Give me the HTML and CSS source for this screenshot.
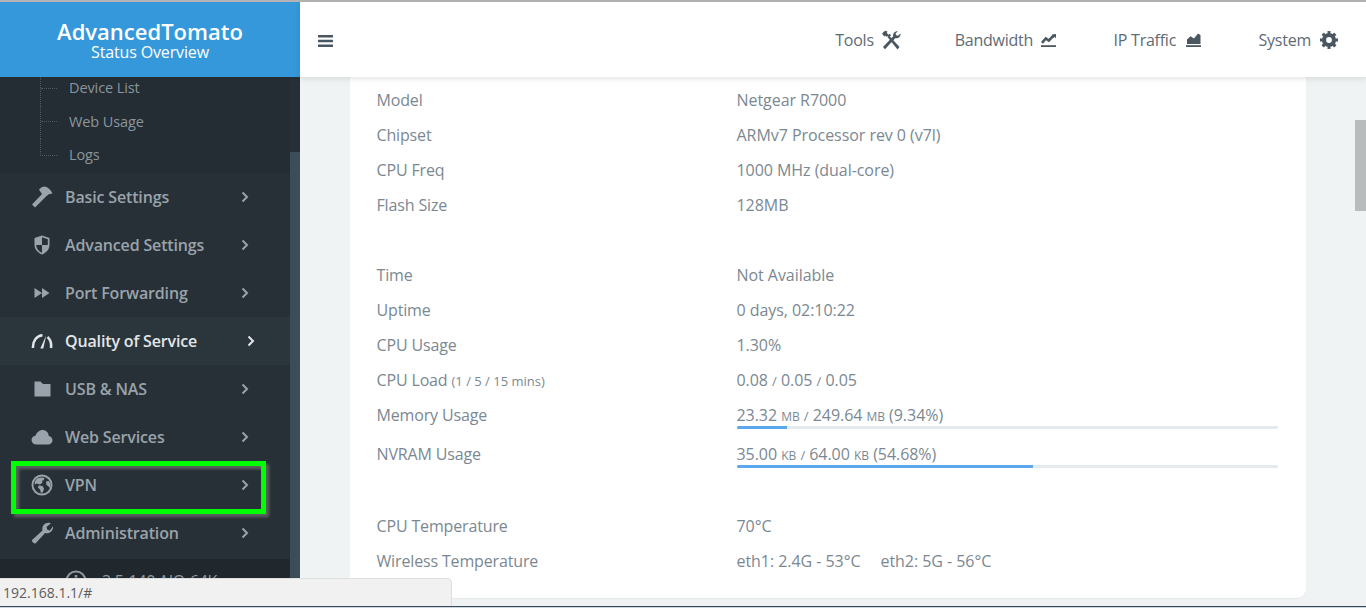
FILE: index.html
```html
<!DOCTYPE html>
<html lang="en">
<head>
<meta charset="utf-8">
<title>AdvancedTomato - Status Overview</title>
<link rel="stylesheet" href="styles.css">
</head>
<body>
<div class="app">
  <div class="topline"></div>
  <div class="screen">
    <aside class="sidebar">
      <header class="brand">
        <div class="brand-name">AdvancedTomato</div>
        <div class="brand-sub">Status Overview</div>
      </header>
      <div class="side-body">
        <nav class="side-nav">
          <ul class="sub">
            <li><span class="tick"></span><a>Device List</a></li>
            <li><span class="tick"></span><a>Web Usage</a></li>
            <li><span class="tick"></span><a>Logs</a></li>
          </ul>
          <a class="item">
            <svg class="ico" viewBox="0 0 22 22"><path d="M1 18.5 11 8 8 3.8Q10.500.500 14 .5 19 2 21.500 7.500L17.800 8.300 15 10.500 4 21.500Z"/></svg>
            <span class="item-label">Basic Settings</span>
            <svg class="chev" viewBox="0 0 8 12"><path d="M1.500 1.500 6 6 1.500 10.500"/></svg>
          </a>
          <a class="item">
            <svg class="ico" viewBox="0 0 22 22"><path d="M11 1.500 18.500 4V11C18.500 16 14 19.500 11 20.500 8 19.500 3.500 16 3.500 11V4Z"/><path class="cut" d="M11 3.200V11H16.800V5.200ZM11 11V18.800C8.500 17.700 5.400 15 5.200 11Z"/></svg>
            <span class="item-label">Advanced Settings</span>
            <svg class="chev" viewBox="0 0 8 12"><path d="M1.500 1.500 6 6 1.500 10.500"/></svg>
          </a>
          <a class="item">
            <svg class="ico" viewBox="0 0 22 22"><path d="M3.500 6 11 11 3.500 16ZM11 6 18.500 11 11 16Z"/></svg>
            <span class="item-label">Port Forwarding</span>
            <svg class="chev" viewBox="0 0 8 12"><path d="M1.500 1.500 6 6 1.500 10.500"/></svg>
          </a>
          <a class="item item-active">
            <svg class="ico" viewBox="0 0 22 22"><path class="line" d="M2 18C1.500 11 6 5.500 11.500 5.300M16.500 7C19.500 9.500 20.500 14 20 18"/><path d="M9.300 18.500 15.200 5.500 12.300 18.500Z"/></svg>
            <span class="item-label">Quality of Service</span>
            <svg class="chev" viewBox="0 0 8 12"><path d="M1.500 1.500 6 6 1.500 10.500"/></svg>
          </a>
          <a class="item">
            <svg class="ico" viewBox="0 0 22 22"><path d="M3.500 3.500H9.500L12 6H19.500V18.500H3.500Z"/></svg>
            <span class="item-label">USB &amp; NAS</span>
            <svg class="chev" viewBox="0 0 8 12"><path d="M1.500 1.500 6 6 1.500 10.500"/></svg>
          </a>
          <a class="item">
            <svg class="ico" viewBox="0 0 22 22"><path d="M5.500 18.500C2.500 18.500.500 16.500.500 14 .500 11.500 2.500 9.800 4.500 9.800 5.500 6.500 8.500 4 11.500 4 15 4 17.500 6.500 17.800 10 20 10.300 21.500 12 21.500 14.200 21.500 16.500 19.500 18.500 17 18.500Z"/></svg>
            <span class="item-label">Web Services</span>
            <svg class="chev" viewBox="0 0 8 12"><path d="M1.500 1.500 6 6 1.500 10.500"/></svg>
          </a>
          <a class="item">
            <svg class="ico" viewBox="0 0 22 22"><circle cx="11" cy="11" r="10.500"/><circle class="cut" cx="11" cy="11" r="8.600"/><path d="M6 4.500 10 3.500 13.500 4 12.500 6.500 11 6.500 11.500 8.500 9 10.500 5.500 9.500 4 10.500 3.500 8ZM7.500 11.500 11.500 12 13 14.500 12 18 10 19 9 15.500 7 13.500ZM15 7.500 18 7 19.500 10.500 19 14 17 12 15.500 11Z"/></svg>
            <span class="item-label">VPN</span>
            <svg class="chev" viewBox="0 0 8 12"><path d="M1.500 1.500 6 6 1.500 10.500"/></svg>
          </a>
          <a class="item">
            <svg class="ico" viewBox="0 0 22 22"><path d="M1 18 11.500 8.500C10.500 4.500 13.500.500 18 .800 19 .900 19.500 1.200 19.800 1.500L15.500 5 16.300 7.700 18.800 8.500 22 4.300C22.500 8.800 18.500 12.500 14 11L4.500 21.500C3 22 .500 19.500 1 18Z"/></svg>
            <span class="item-label">Administration</span>
            <svg class="chev" viewBox="0 0 8 12"><path d="M1.500 1.500 6 6 1.500 10.500"/></svg>
          </a>
          <div class="side-foot">
            <svg class="foot-ico" viewBox="0 0 22 22"><circle class="line" cx="11" cy="11" r="9.500"/><rect x="9.700" y="5" width="2.600" height="2.600"/><rect x="9.700" y="9" width="2.600" height="8"/></svg>
            <span class="foot-text">3.5-140 AIO-64K</span>
          </div>
        </nav>
        <div class="side-track"><div class="side-thumb"></div></div>
      </div>
    </aside>

    <div class="main">
      <header class="topbar">
        <svg class="burger" viewBox="0 0 15 12"><path d="M0 0H15V2.500H0ZM0 4.800H15V7.300H0ZM0 9.500H15V12H0Z"/></svg>
        <div class="top-links">
          <a class="top-link">Tools
            <svg class="top-ico ti-tools" viewBox="0 0 20 20"><path d="M1 3.500 4 .800 6.500 1.500 5.800 3 7.500 4.800 8.800 3.800 10 5.200 8.200 7.200 7 6 5.800 6.800 4.500 5.800 3.300 6.600Z"/><path d="M6.500 7 8 5.500 18.500 17 16.500 19.500Z"/><path d="M2 17 12.200 6.300C11.700 3.500 13.500 1 16.800 1.200L14.500 3.500 15.200 5.200 17 5.800 19.500 3.500C19.800 6.800 17.500 8.700 14.200 8.300L4 19.300Z"/></svg>
          </a>
          <a class="top-link">Bandwidth
            <svg class="top-ico ti-chart" viewBox="0 0 15 14"><path d="M0 12.200H15V14H0Z"/><path class="line" d="M1 9.800 4.800 5.500 7.800 7.600 12 3 13.500 3.800"/><path d="M11 1.500 15 1V5.300Z"/></svg>
          </a>
          <a class="top-link">IP Traffic
            <svg class="top-ico ti-area" viewBox="0 0 15 14"><path d="M0 12.200H15V14H0Z"/><path d="M1 11V6.500L4.500 3.200 8 5.500 12 0.500 14.500 2V11Z"/></svg>
          </a>
          <a class="top-link">System
            <svg class="top-ico ti-cog" viewBox="0 0 18 18"><circle class="gear-ring" cx="9" cy="9" r="5"/><circle class="gear-teeth" cx="9" cy="9" r="7.300" pathLength="48"/></svg>
          </a>
        </div>
      </header>
      <div class="content">
        <section class="card">
          <div class="group">
            <div class="row"><div>Model</div><div>Netgear R7000</div></div>
            <div class="row"><div>Chipset</div><div>ARMv7 Processor rev 0 (v7l)</div></div>
            <div class="row"><div>CPU Freq</div><div>1000 MHz (dual-core)</div></div>
            <div class="row"><div>Flash Size</div><div>128MB</div></div>
          </div>
          <div class="group">
            <div class="row"><div>Time</div><div>Not Available</div></div>
            <div class="row"><div>Uptime</div><div>0 days, 02:10:22</div></div>
            <div class="row"><div>CPU Usage</div><div>1.30%</div></div>
            <div class="row"><div>CPU Load <small>(1 / 5 / 15 mins)</small></div><div>0.08 <small>/</small> 0.05 <small>/</small> 0.05</div></div>
            <div class="row row-bar"><div>Memory Usage</div><div>23.32 <small class="unit">MB</small> <small>/</small> 249.64 <small class="unit">MB</small> (9.34%)<div class="bar"><div class="fill" style="width:9.34%"></div></div></div></div>
            <div class="row row-bar"><div>NVRAM Usage</div><div>35.00 <small class="unit">KB</small> <small>/</small> 64.00 <small class="unit">KB</small> (54.68%)<div class="bar"><div class="fill" style="width:54.68%"></div></div></div></div>
          </div>
          <div class="group group-temp">
            <div class="row"><div>CPU Temperature</div><div>70°C</div></div>
            <div class="row"><div>Wireless Temperature</div><div><span class="eth">eth1: 2.4G - 53°C</span><span>eth2: 5G - 56°C</span></div></div>
          </div>
        </section>
      </div>
      <div class="page-thumb"></div>
    </div>
  </div>
  <div class="bottomline"></div>
  <div class="status-bubble">192.168.1.1/#</div>
  <div class="highlight"></div>
</div>
</body>
</html>
```
FILE: styles.css
```css
* { box-sizing: border-box; }
html, body { margin: 0; height: 100%; overflow: hidden; }
body { font-family: "Open Sans", "Noto Sans", sans-serif; font-size: 16px; color: #7b8892; background: #eff3f4; }
a { color: inherit; text-decoration: none; }
ul { list-style: none; margin: 0; padding: 0; }

.app { position: relative; display: flex; flex-direction: column; height: 608px; overflow: hidden; }
.topline { height: 2px; background: #b4b4b4; flex: none; }
.bottomline { height: 2px; flex: none; background: #3c4852; border-bottom: 1px solid #c9d6e4; }
.screen { flex: 1; display: flex; min-height: 0; }

/* sidebar */
.sidebar { width: 300px; flex: none; display: flex; flex-direction: column; background: #273036; }
.brand { height: 75px; flex: none; background: #3498db; color: #fff; text-align: center; padding-top: 15px; }
.brand-name { font-size: 22px; font-weight: 600; line-height: 28px; }
.brand-sub { font-size: 16px; line-height: 14px; letter-spacing: -.15px; }
.side-body { flex: 1; display: flex; min-height: 0; }
.side-nav { flex: 1; min-width: 0; overflow: hidden; }
.side-track { width: 10px; flex: none; background: #262f35; }
.side-thumb { height: 100%; margin-top: 75px; background: #3c4d58; }

.sub { background: #242d33; margin-top: -5px; padding-bottom: .5px; color: #8b959c; font-size: 14.5px; letter-spacing: -.1px; }
.sub li { height: 33.5px; margin-left: 40px; border-left: 1px dotted #4d585f; display: flex; align-items: center; }
.sub li a { margin-top: -2px; }
.sub li:last-child { border-left: 0; }
.tick { width: 16px; height: 50%; align-self: flex-start; border-bottom: 1px dotted #4d585f; margin-right: 12px; flex: none; }
.sub li:last-child .tick { border-left: 1px dotted #4d585f; width: 17px; }

.item { height: 48px; display: flex; align-items: center; padding-left: 31px; color: #9aa3ab; font-weight: 600; font-size: 16px; letter-spacing: -.15px; }
.ico { width: 22px; height: 22px; flex: none; fill: #9aa3ab; margin-right: 12px; }
.ico .cut { fill: #273036; }
.ico .line, .item-active .ico .line { fill: none; stroke: currentColor; stroke-width: 2.5; }
.item-label { flex: 1; }
.chev { width: 8px; height: 12px; flex: none; fill: none; stroke: currentColor; stroke-width: 2; margin-right: 41px; }
.item-active { background: #2b353c; color: #e3e6e8; }
.item-active .ico { fill: #e3e6e8; color: #e3e6e8; }
.item-active .chev { margin-right: 35px; }

.side-foot { height: 60px; margin-top: 2px; background: #20282d; display: flex; align-items: flex-start; padding: 11px 0 0 65px; color: #8f99a0; font-size: 16px; letter-spacing: -.3px; }
.foot-ico { width: 22px; height: 22px; flex: none; fill: #8f99a0; stroke: none; margin-right: 15px; }
.foot-ico .line { fill: none; stroke: #8f99a0; stroke-width: 2; }
.foot-text { line-height: 22px; }

/* main */
.main { flex: 1; min-width: 0; display: flex; flex-direction: column; position: relative; }
.topbar { height: 75px; flex: none; background: #fff; display: flex; align-items: center; padding: 0 28px 0 18px; box-shadow: 0 2px 6px rgba(0, 0, 0, .1); position: relative; z-index: 1; color: #5f6b74; }
.burger { width: 15px; height: 12px; fill: #4a5761; margin-top: 3px; }
.top-links { margin-left: auto; display: flex; align-items: center; }
.top-link { display: flex; align-items: center; font-size: 16px; letter-spacing: -.25px; margin-left: 57.5px; }
.top-link:nth-child(2) { margin-left: 54px; }
.top-ico { flex: none; fill: #4a5761; }
.top-ico .line { fill: none; stroke: #4a5761; stroke-width: 2.6; }
.ti-tools { width: 20px; height: 20px; margin-left: 7px; }
.ti-chart { width: 15px; height: 14px; margin-left: 8px; }
.ti-area { width: 15px; height: 14px; margin-left: 10px; }
.ti-cog { width: 18px; height: 18px; margin-left: 9px; }
.gear-ring { fill: none; stroke: #4a5761; stroke-width: 4.200; }
.gear-teeth { fill: none; stroke: #4a5761; stroke-width: 3.400; stroke-dasharray: 3 3; stroke-dashoffset: 1.500; }

.content { flex: 1; min-height: 0; padding: 0 60px 8px 50px; }
.card { height: 100%; background: #fff; border-radius: 0 0 9px 9px; padding: 6px 28px 0 26.5px; box-shadow: 0 1px 1px rgba(0, 0, 0, .04); overflow: hidden; }
.group + .group { margin-top: 35px; }
.group-temp.group { margin-top: 33px; }
.row { display: grid; grid-template-columns: 360px 1fr; height: 35px; line-height: 35px; white-space: nowrap; letter-spacing: -.15px; }
.row > div + div { letter-spacing: -.05px; }
.row-bar { height: 39px; }
small { font-size: 13px; letter-spacing: 0; }
.unit { font-size: 12px; }
.bar { height: 3px; margin-top: -8.500px; background: #e4eaed; border-radius: 2px; overflow: hidden; }
.fill { height: 100%; background: #5ba8ee; }
.eth { margin-right: 20px; }

.page-thumb { position: absolute; right: 0; top: 118px; width: 11px; height: 91px; background: #b8bcbc; }

/* overlays */
.status-bubble { position: absolute; left: 0; top: 578px; width: 452px; height: 28px; background: #f1f1f1; border: 1px solid #dedede; border-left: 0; border-bottom: 0; border-radius: 0 5px 0 0; color: #5c5c5c; font-size: 14px; line-height: 27px; padding-left: 3px; z-index: 3; }
.highlight { position: absolute; left: 11px; top: 461px; width: 255px; height: 53px; border: 5px solid #00ff00; box-shadow: 3px 3px 3px rgba(110, 110, 110, .8), inset 3px 3px 3px rgba(110, 110, 110, .8); z-index: 2; }
```
